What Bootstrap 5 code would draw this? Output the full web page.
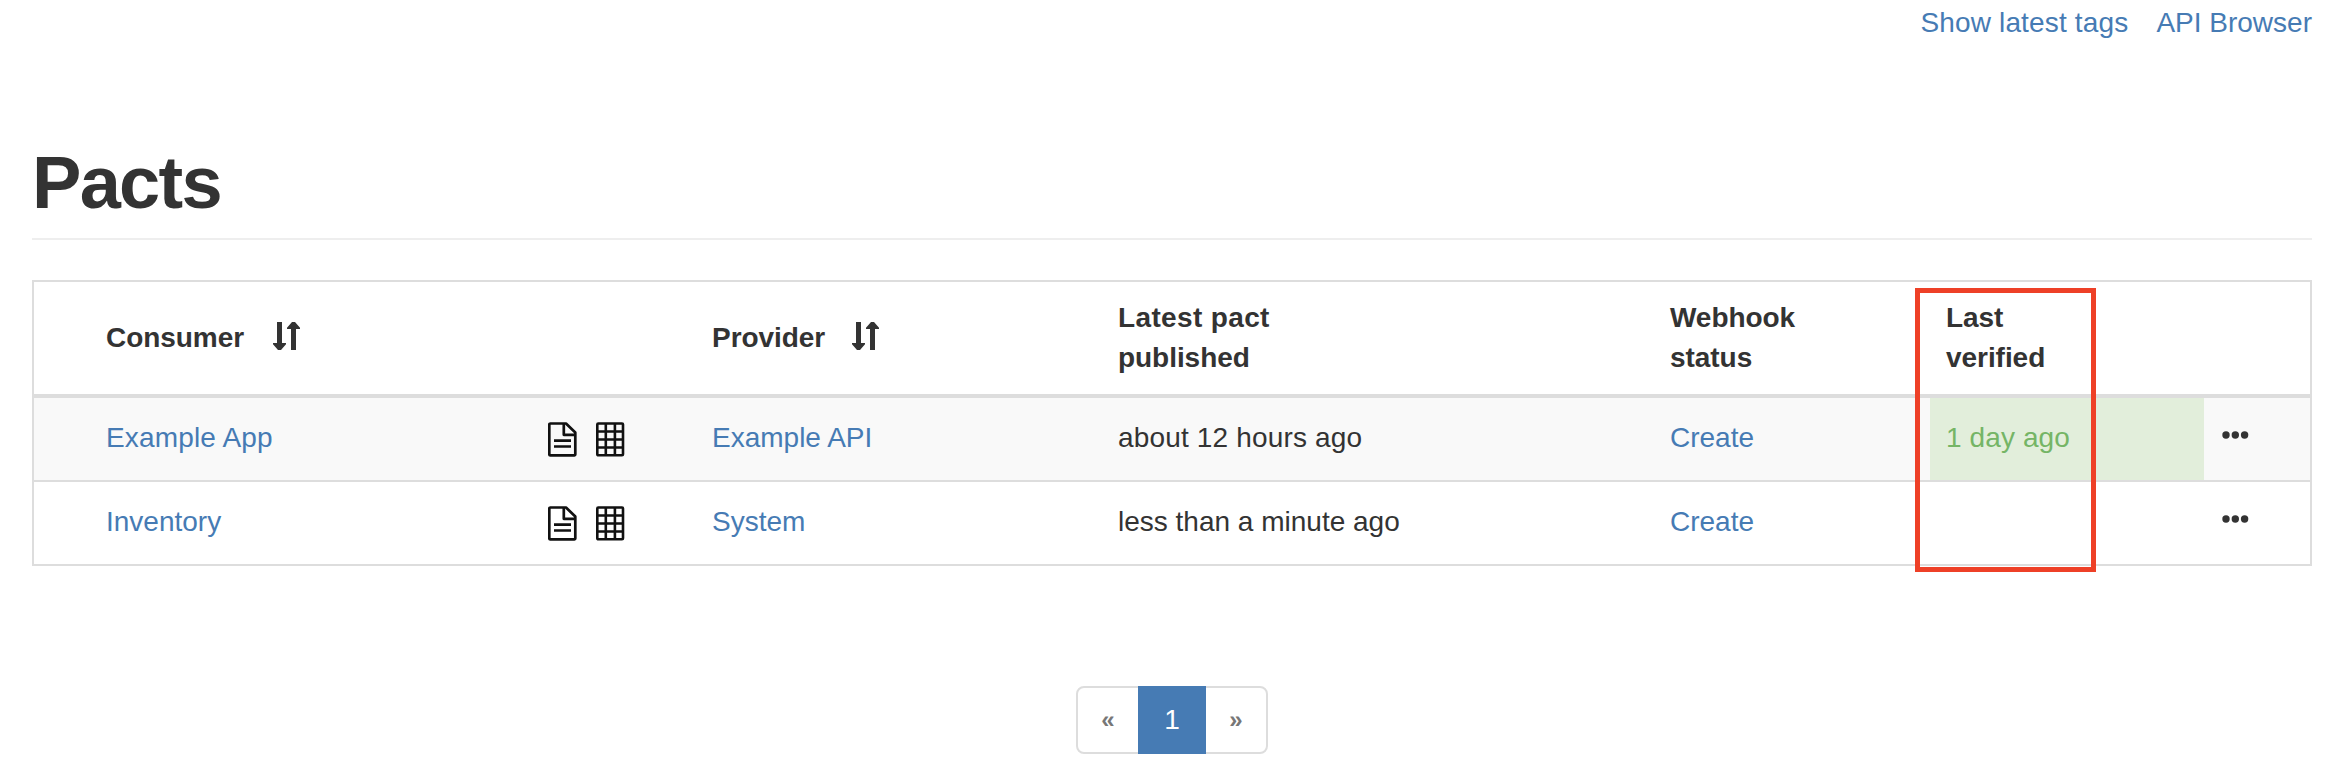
<!DOCTYPE html>
<html lang="en">
<head>
<meta charset="utf-8">
<title>Pacts</title>
<link href="https://cdn.jsdelivr.net/npm/bootstrap@5.3.0/dist/css/bootstrap.min.css" rel="stylesheet">
<style>
  body { font-family: "Liberation Sans", Arial, sans-serif; font-size: 28px; line-height: 40px; color: #333; background: #fff; overflow: hidden; }
  a { color: #467bb4; text-decoration: none; }
  .page { padding: 3px 26px 0 32px; }
  .top-links { gap: 28px; height: 40px; }
  .page-title { font-size: 74px; line-height: 80px; font-weight: 700; margin: 100px 0 40px; border-bottom: 2px solid #eee; height: 97px; letter-spacing: -1.7px; }
  .pacts { border: 2px solid #ddd; height: 286px; }
  .pacts table { table-layout: fixed; width: 100%; margin: 0; border-collapse: separate; border-spacing: 0; }
  .pacts th, .pacts td { padding: 0 16px; vertical-align: middle; border: 0; box-shadow: none; background: transparent; color: #333; }
  .pacts th { height: 116px; border-bottom: 4px solid #ddd; line-height: 40px; letter-spacing: -.05px; }
  .pacts td { height: 84px; padding-bottom: 2px; border-bottom: 2px solid #ddd; }
  .pacts td.tools { padding-bottom: 0; }
  .pacts tr:last-child td { height: 82px; border-bottom: 0; }
  .pacts .first { padding-left: 72px; }
  .pacts .striped td { background: #f9f9f9; }
  .pacts .striped td.verified { background: #e2eedb; color: #75b566; letter-spacing: .1px; }
  .pacts svg { display: block; }
  .pacts .sort-icon { margin-top: -4px; }
  .sort-consumer { margin-right: 216px; }
  .sort-provider { margin-right: 207px; }
  .tool-icons { gap: 19px; }
  .dots { margin: 0 0 7px 2px; }
  .loose { letter-spacing: .16px; }
  .looser { letter-spacing: .36px; }
  .marker { left: 1881px; top: 6px; width: 181px; height: 284px; border: 5px solid #ee4027; }
  .pagination { margin: 120px 0 0; }
  .pagination .page-link { width: 64px; height: 68px; padding: 12px 0; border: 2px solid #ddd; text-align: center; font-size: 24px; font-weight: 700; line-height: 40px; color: #777; background: #fff; }
  .pagination .page-item:first-child .page-link { border-radius: 8px 0 0 8px; }
  .pagination .page-item:last-child .page-link { border-radius: 0 8px 8px 0; }
  .pagination .page-item:not(:first-child) .page-link { margin-left: -2px; }
  .pagination .active .page-link { width: 68px; font-size: 28px; font-weight: 400; background: #467bb4; border-color: #467bb4; color: #fff; }
</style>
</head>
<body>
<svg class="d-none">
  <symbol id="sort" viewBox="0 0 27 28"><path fill="#333" d="M4 0h5v21h4v1.300l-5 5.700h-3l-5-5.700v-1.300h4zM18 28h5v-21h4v-1.300l-5-5.700h-3l-5 5.700v1.300h4z"/></symbol>
  <symbol id="doc" viewBox="0 0 29 35"><g fill="none" stroke="#111" stroke-width="2.700" stroke-linejoin="round"><path d="M2.300 1.500H18L27.300 10.500V32.500Q27.300 33.300 26.500 33.300H2.200Q1.300 33.300 1.300 32.500V2.500Q1.300 1.500 2.300 1.500Z"/><path d="M15.800 1.500V12.800H27.300M6 18.700H23M6 24.500H23"/></g></symbol>
  <symbol id="grid" viewBox="0 0 29 35"><g fill="none" stroke="#111" stroke-width="2.600"><rect x="1.300" y="1.500" width="25.700" height="31.800" rx="1"/><path d="M9.800 1.500V33M18.900 1.500V33M1.300 9.500H27M1.300 17.500H27M1.300 25.500H27"/></g></symbol>
  <symbol id="more" viewBox="0 0 27 8"><g fill="#333"><circle cx="4" cy="4" r="3.700"/><circle cx="13.300" cy="4" r="3.700"/><circle cx="22.600" cy="4" r="3.700"/></g></symbol>
</svg>
<main class="page">
  <nav class="top-links d-flex justify-content-end">
    <a class="loose" href="#">Show latest tags</a>
    <a href="#">API Browser</a>
  </nav>
  <h1 class="page-title">Pacts</h1>
  <div class="pacts position-relative">
    <table class="table">
      <colgroup><col style="width:498px"><col style="width:164px"><col style="width:406px"><col style="width:552px"><col style="width:276px"><col style="width:274px"><col style="width:106px"></colgroup>
      <thead>
        <tr>
          <th class="first"><div class="d-flex align-items-center">Consumer<svg class="sort-icon sort-consumer ms-auto" width="27" height="28"><use href="#sort"/></svg></div></th>
          <th></th>
          <th><div class="d-flex align-items-center">Provider<svg class="sort-icon sort-provider ms-auto" width="27" height="28"><use href="#sort"/></svg></div></th>
          <th><span class="looser">Latest pact</span><br>published</th>
          <th>Webhook<br>status</th>
          <th>Last<br>verified</th>
          <th></th>
        </tr>
      </thead>
      <tbody>
        <tr class="striped">
          <td class="first"><a class="loose" href="#">Example App</a></td>
          <td class="tools"><div class="tool-icons d-flex"><svg width="29" height="35"><use href="#doc"/></svg><svg width="29" height="35"><use href="#grid"/></svg></div></td>
          <td><a href="#">Example API</a></td>
          <td class="loose">about 12 hours ago</td>
          <td><a href="#">Create</a></td>
          <td class="verified">1 day ago</td>
          <td><svg class="dots" width="27" height="8"><use href="#more"/></svg></td>
        </tr>
        <tr>
          <td class="first"><a href="#">Inventory</a></td>
          <td class="tools"><div class="tool-icons d-flex"><svg width="29" height="35"><use href="#doc"/></svg><svg width="29" height="35"><use href="#grid"/></svg></div></td>
          <td><a href="#">System</a></td>
          <td>less than a minute ago</td>
          <td><a href="#">Create</a></td>
          <td></td>
          <td><svg class="dots" width="27" height="8"><use href="#more"/></svg></td>
        </tr>
      </tbody>
    </table>
    <div class="marker position-absolute"></div>
  </div>
  <ul class="pagination justify-content-center">
    <li class="page-item"><a class="page-link" href="#">«</a></li>
    <li class="page-item active"><a class="page-link" href="#">1</a></li>
    <li class="page-item"><a class="page-link" href="#">»</a></li>
  </ul>
</main>
<script src="https://cdn.jsdelivr.net/npm/bootstrap@5.3.0/dist/js/bootstrap.bundle.min.js"></script>
</body>
</html>
